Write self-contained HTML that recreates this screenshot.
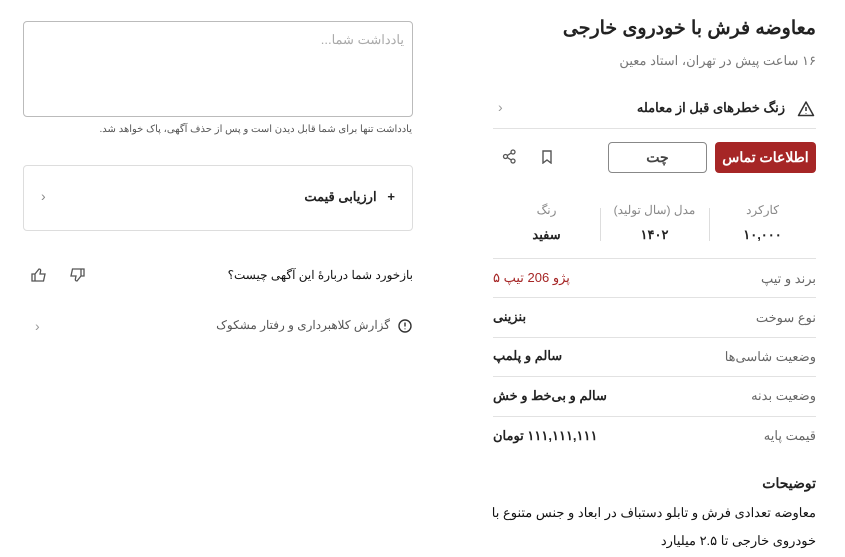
<!DOCTYPE html>
<html dir="rtl"><head><meta charset="utf-8"><style>
*{box-sizing:border-box;margin:0;padding:0}
body{width:845px;height:557px;background:#fff;font-family:"Liberation Sans","Noto Sans CJK SC",sans-serif;color:#222;position:relative;overflow:hidden}
.a{position:absolute;white-space:nowrap}
.hr{position:absolute;height:1px;background:#e2e2e2;left:493px;width:323px}
.lbl{font-size:13px;color:#666}
.val{font-size:13px;font-weight:bold;color:#222}
</style></head><body>
<div class="a" style="right:29px;top:17px;font-size:19px;font-weight:bold;color:#222">معاوضه فرش با خودروی خارجی</div>
<div class="a" style="right:29px;top:53px;font-size:13px;color:#777">۱۶ ساعت پیش در تهران، استاد معین</div>
<svg class="a" style="left:797px;top:100px" width="18" height="18" viewBox="0 0 18 18" fill="none" stroke="#333" stroke-width="1.5"><path d="M9 2L16.5 15.5H1.5Z" stroke-linejoin="round"/><path d="M9 7v4M9 13v.5"/></svg>
<div class="a" style="right:60px;top:100px;font-size:13px;font-weight:bold">زنگ خطرهای قبل از معامله</div>
<div class="a" style="left:498px;top:99px;font-size:14px;color:#999">‹</div>
<div class="hr" style="top:128px"></div>
<div class="a" style="left:715px;top:142px;width:101px;height:31px;background:#a62626;border-radius:4px;color:#fff;font-size:14px;font-weight:bold;text-align:center;line-height:31px">اطلاعات تماس</div>
<div class="a" style="left:608px;top:142px;width:99px;height:31px;border:1px solid #888;border-radius:4px;color:#444;font-size:14px;font-weight:bold;text-align:center;line-height:29px">چت</div>
<svg class="a" style="left:541px;top:150px" width="12" height="14" viewBox="0 0 12 14" fill="none" stroke="#555" stroke-width="1.4"><path d="M2 1h8v12L6 10 2 13Z"/></svg>
<svg class="a" style="left:502px;top:149px" width="15" height="15" viewBox="0 0 15 15" fill="none" stroke="#555" stroke-width="1.3"><circle cx="11" cy="3" r="2"/><circle cx="3.5" cy="7.5" r="2"/><circle cx="11" cy="12" r="2"/><path d="M5.3 6.5L9.2 4M5.3 8.5l3.9 2.5"/></svg>
<div class="a lbl" style="left:709px;width:107px;top:203px;text-align:center;font-size:12px;color:#888">کارکرد</div>
<div class="a val" style="left:709px;width:107px;top:227px;text-align:center">۱۰,۰۰۰</div>
<div class="a" style="left:709px;top:208px;width:1px;height:33px;background:#ddd"></div>
<div class="a lbl" style="left:600px;width:109px;top:203px;text-align:center;font-size:12px;color:#888">مدل (سال تولید)</div>
<div class="a val" style="left:600px;width:109px;top:227px;text-align:center">۱۴۰۲</div>
<div class="a" style="left:600px;top:208px;width:1px;height:33px;background:#ddd"></div>
<div class="a lbl" style="left:493px;width:107px;top:203px;text-align:center;font-size:12px;color:#888">رنگ</div>
<div class="a val" style="left:493px;width:107px;top:227px;text-align:center">سفید</div>
<div class="hr" style="top:258px"></div>
<div class="a lbl" style="right:29px;top:271px">برند و تیپ</div><div class="a val" style="left:493px;top:270px;color:#a62626;font-weight:normal">پژو 206 تیپ ۵</div>
<div class="hr" style="top:297px"></div>
<div class="a lbl" style="right:29px;top:310px">نوع سوخت</div><div class="a val" style="left:493px;top:309px">بنزینی</div>
<div class="hr" style="top:337px"></div>
<div class="a lbl" style="right:29px;top:349px">وضعیت شاسی‌ها</div><div class="a val" style="left:493px;top:348px">سالم و پلمپ</div>
<div class="hr" style="top:376px"></div>
<div class="a lbl" style="right:29px;top:388px">وضعیت بدنه</div><div class="a val" style="left:493px;top:388px">سالم و بی‌خط و خش</div>
<div class="hr" style="top:416px"></div>
<div class="a lbl" style="right:29px;top:428px">قیمت پایه</div><div class="a val" style="left:493px;top:428px">۱۱۱,۱۱۱,۱۱۱ تومان</div>
<div class="a" style="right:29px;top:475px;font-size:14px;font-weight:bold">توضیحات</div>
<div class="a" style="right:29px;top:499px;font-size:13px;line-height:28px;white-space:normal;width:330px;text-align:right;color:#111">معاوضه تعدادی فرش و تابلو دستباف در ابعاد و جنس متنوع با خودروی خارجی تا ۲.۵ میلیارد</div>

<div class="a" style="left:23px;top:21px;width:390px;height:96px;border:1px solid #bbb;border-radius:4px"></div>
<div class="a" style="right:441px;top:32px;font-size:13px;color:#aaa">یادداشت شما...</div>
<div class="a" style="right:433px;top:124px;font-size:10px;color:#555">یادداشت تنها برای شما قابل دیدن است و پس از حذف آگهی، پاک خواهد شد.</div>
<div class="a" style="left:23px;top:165px;width:390px;height:66px;border:1px solid #ddd;border-radius:4px"></div>
<div class="a" style="right:450px;top:189px;font-size:13px;font-weight:bold">+&nbsp;&nbsp;&nbsp;ارزیابی قیمت</div>
<div class="a" style="left:41px;top:188px;font-size:14px;color:#888">‹</div>
<div class="a" style="right:432px;top:268px;font-size:12px;color:#111">بازخورد شما دربارهٔ این آگهی چیست؟</div>
<svg class="a" style="left:31px;top:268px" width="16" height="14" viewBox="0 0 16 14" fill="none" stroke="#555" stroke-width="1.3"><path d="M1 6h3v7H1zM4 6l4-5c1.5 0 2 1 1.5 2.5L9 6h5l-1.5 7H4"/></svg>
<svg class="a" style="left:69px;top:268px" width="16" height="14" viewBox="0 0 16 14" fill="none" stroke="#555" stroke-width="1.3"><path d="M15 8h-3V1h3zM12 8l-4 5c-1.5 0-2-1-1.5-2.5L7 8H2l1.5-7H12"/></svg>
<svg class="a" style="left:398px;top:319px" width="14" height="14" viewBox="0 0 14 14" fill="none" stroke="#333" stroke-width="1.4"><circle cx="7" cy="7" r="6"/><path d="M7 3.5v4M7 9.5v.8"/></svg>
<div class="a" style="right:455px;top:318px;font-size:12px;color:#555">گزارش کلاهبرداری و رفتار مشکوک</div>
<div class="a" style="left:35px;top:318px;font-size:14px;color:#999">‹</div>
</body></html>
